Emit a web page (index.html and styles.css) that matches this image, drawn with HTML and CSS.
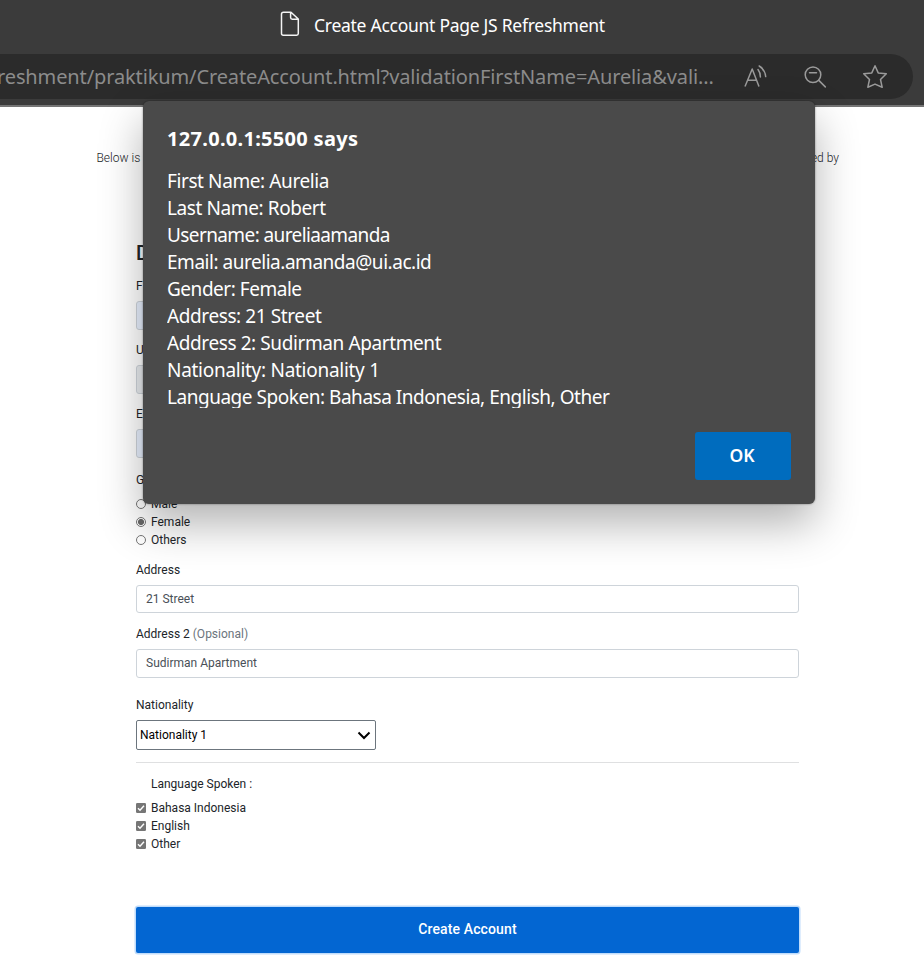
FILE: index.html
```html
<!DOCTYPE html>
<html lang="en">
<head>
<meta charset="utf-8">
<title>Create Account Page JS Refreshment</title>
<link rel="stylesheet" href="styles.css">
</head>
<body>
<header class="chrome">
  <div class="tab">
    <svg class="file-icon" width="20" height="26" viewBox="0 0 20 26"><path d="M3.5 1.2H11L18.3 8V22.5Q18.3 24.2 16.6 24.2H3.2Q1.5 24.2 1.5 22.5V3Q1.5 1.2 3.5 1.2ZM10.6 1.5V6.5Q10.6 8.2 12.3 8.2H18"/></svg>
    <span class="tab-title">Create Account Page JS Refreshment</span>
  </div>
  <div class="bar">
    <span class="url">reshment/praktikum/CreateAccount.html?validationFirstName=Aurelia&amp;vali...</span>
    <div class="tools">
      <svg width="26" height="26" viewBox="0 0 26 26"><path d="M3.2 22 10.2 5 16.8 22M5.8 16.2H14.3M16 5.5Q18.4 8.5 18.4 13M17.2 2Q23 5.5 23.7 12.6"/></svg>
      <svg width="26" height="26" viewBox="0 0 26 26"><circle cx="11" cy="10.7" r="7.8"/><path d="M7.5 8.8H14.5M16.8 16.4 23.3 22.9"/></svg>
      <svg width="26" height="26" viewBox="0 0 26 26"><path d="M13 1.8 16.2 8.9 24.3 9.8 18.5 15.5 20.2 23.3 13 20.1 5.8 23.3 7.5 15.5 1.7 9.8 9.8 8.9Z"/></svg>
    </div>
  </div>
</header>
<main class="page">
  <p class="intro"><span>Below is</span><span>created by</span></p>
  <form class="form">
    <h2 class="heading">Data</h2>
    <div class="field"><label>First Name</label><div class="input filled"></div></div>
    <div class="field"><label>Username</label><div class="input muted"></div></div>
    <div class="field third"><label>Email</label><div class="input filled"></div></div>
    <div class="group">
      <label>Gender</label>
      <div class="options">
        <div class="option"><i class="radio"></i><span>Male</span></div>
        <div class="option"><i class="radio on"></i><span>Female</span></div>
        <div class="option"><i class="radio"></i><span>Others</span></div>
      </div>
    </div>
    <div class="field"><label>Address</label><div class="input short">21 Street</div></div>
    <div class="field last"><label>Address 2 <span class="optional">(Opsional)</span></label><div class="input tall">Sudirman Apartment</div></div>
    <div class="field nation"><label>Nationality</label>
      <div class="select"><span>Nationality 1</span><svg width="14" height="10" viewBox="0 0 14 10"><path d="M1.5 2.5 7 8 12.5 2.5"/></svg></div>
    </div>
    <div class="languages">
      <label class="indent">Language Spoken :</label>
      <div class="options">
        <div class="option"><svg class="check" viewBox="0 0 10 10"><rect width="10" height="10" rx="1.3"/><path d="M2 5.3 4 7.3 8 2.7"/></svg><span>Bahasa Indonesia</span></div>
        <div class="option"><svg class="check" viewBox="0 0 10 10"><rect width="10" height="10" rx="1.3"/><path d="M2 5.3 4 7.3 8 2.7"/></svg><span>English</span></div>
        <div class="option"><svg class="check" viewBox="0 0 10 10"><rect width="10" height="10" rx="1.3"/><path d="M2 5.3 4 7.3 8 2.7"/></svg><span>Other</span></div>
      </div>
    </div>
    <button class="submit" type="button">Create Account</button>
  </form>
</main>
<div class="dialog" role="alertdialog">
  <div class="dialog-title">127.0.0.1:5500 says</div>
  <div class="message">
    <div>First Name: Aurelia</div>
    <div>Last Name: Robert</div>
    <div class="tighter">Username: aureliaamanda</div>
    <div class="long">Email: aurelia.amanda@ui.ac.id</div>
    <div class="long">Gender: Female</div>
    <div>Address: 21 Street</div>
    <div>Address 2: Sudirman Apartment</div>
    <div class="loose">Nationality: Nationality 1</div>
    <div class="long">Language Spoken: Bahasa Indonesia, English, Other</div>
  </div>
  <button class="ok" type="button">OK</button>
</div>
</body>
</html>
```
FILE: styles.css
```css
* { box-sizing: border-box; }
body {
  margin: 0;
  height: 955px;
  overflow: hidden;
  position: relative;
  background: #fff;
  color: #212529;
  font: 12px/18px Roboto, sans-serif;
}
svg { fill: none; display: block; flex: none; }

.chrome {
  height: 107px;
  background: #3b3b3b;
  border-bottom: 2px solid #757575;
  font-family: "Noto Sans", sans-serif;
}
.tab { height: 54px; display: flex; align-items: center; gap: 14px; padding: 0 0 4px 280px; }
.file-icon { stroke: #f4f4f4; stroke-width: 1.5; stroke-linejoin: round; margin-top: -2px; }
.tab-title { color: #fff; font-size: 17.5px; line-height: 24px; letter-spacing: -0.27px; white-space: nowrap; }
.bar {
  height: 45px;
  width: 913px;
  background: #2b2b2b;
  border-radius: 0 23px 23px 0;
  display: flex;
  align-items: center;
  justify-content: space-between;
  padding-right: 25px;
}
.url { margin-left: -3px; color: #8c8c8c; font-size: 20px; letter-spacing: -0.12px; white-space: nowrap; }
.tools { display: flex; gap: 34px; }
.tools svg { stroke: #9a9a9a; stroke-width: 1.5; stroke-linejoin: round; stroke-linecap: round; }

.page { padding-top: 42px; }
.intro { margin: 0 85px 0 96.5px; display: flex; justify-content: space-between; font-weight: 300; }
.form { margin: 75px 125px 0 136px; }
.heading { margin: 0; height: 35px; font-size: 20px; line-height: 22px; font-weight: 500; }
label { display: block; height: 18px; white-space: nowrap; }
.field { height: 64px; }
.third { height: 65.5px; }
.input {
  height: 29px;
  margin-top: 6px;
  padding: 0 9px;
  border: 1px solid #ced4da;
  border-radius: 3px;
  line-height: 26px;
  color: #495057;
}
.short { height: 28px; }
.tall { line-height: 27px; }
.filled { background: #e8f0fe; }
.muted { background: #e9ecef; }
.optional { color: #6c757d; }
.group { height: 90.5px; }
.options { margin-top: 6px; }
.option { height: 18px; display: flex; align-items: center; gap: 5px; }
.radio { width: 10px; height: 10px; border: 1px solid #767676; border-radius: 50%; }
.radio.on { background: radial-gradient(circle, #686868 0 2.7px, #fff 3.4px); }
.last { height: 71px; }
.nation { height: 67px; border-bottom: 1px solid #dfe0e1; }
.select {
  width: 240px;
  height: 30px;
  margin-top: 6px;
  padding: 0 4px 0 3px;
  border: 1px solid #6c757d;
  border-radius: 2px;
  display: flex;
  align-items: center;
  justify-content: space-between;
  color: #000;
}
.select svg { stroke: #000; stroke-width: 2; }
.languages { padding-top: 12px; height: 144px; }
.indent { margin-left: 15px; }
.check { width: 10px; height: 10px; }
.check rect { fill: #767676; }
.check path { stroke: #fff; stroke-width: 1.4; }
.submit {
  display: block;
  width: 663px;
  height: 46px;
  padding: 0 0 2px;
  border: 0;
  border-radius: 2px;
  background: #0366d2;
  box-shadow: 0 0 0 1.5px #bfdcfb;
  color: #fff;
  font: 500 14px/18px Roboto, sans-serif;
  letter-spacing: 0.12px;
}

.dialog {
  position: absolute;
  left: 143px;
  top: 101px;
  width: 672px;
  height: 403px;
  padding: 24px;
  border-radius: 6px;
  background: #4a4a4a;
  box-shadow: 0 0 2px rgba(0,0,0,.5), 0 20px 44px rgba(0,0,0,.3);
  color: #fff;
  font-family: "Noto Sans", sans-serif;
  display: flex;
  flex-direction: column;
}
.dialog-title { height: 43px; font-size: 20px; line-height: 28px; font-weight: 700; letter-spacing: 0.3px; }
.message { height: 240px; overflow: hidden; font-size: 19px; line-height: 27px; letter-spacing: -0.4px; white-space: nowrap; }
.tighter { letter-spacing: -0.6px; }
.loose { letter-spacing: -0.28px; }
.long { letter-spacing: -0.47px; }
.ok {
  align-self: flex-end;
  margin-top: 24px;
  width: 96px;
  height: 48px;
  flex: none;
  padding: 0 2px 2px 0;
  border: 0;
  border-radius: 3px;
  background: #006cbe;
  color: #fff;
  font: 600 17.5px/24px "Noto Sans", sans-serif;
}
```
